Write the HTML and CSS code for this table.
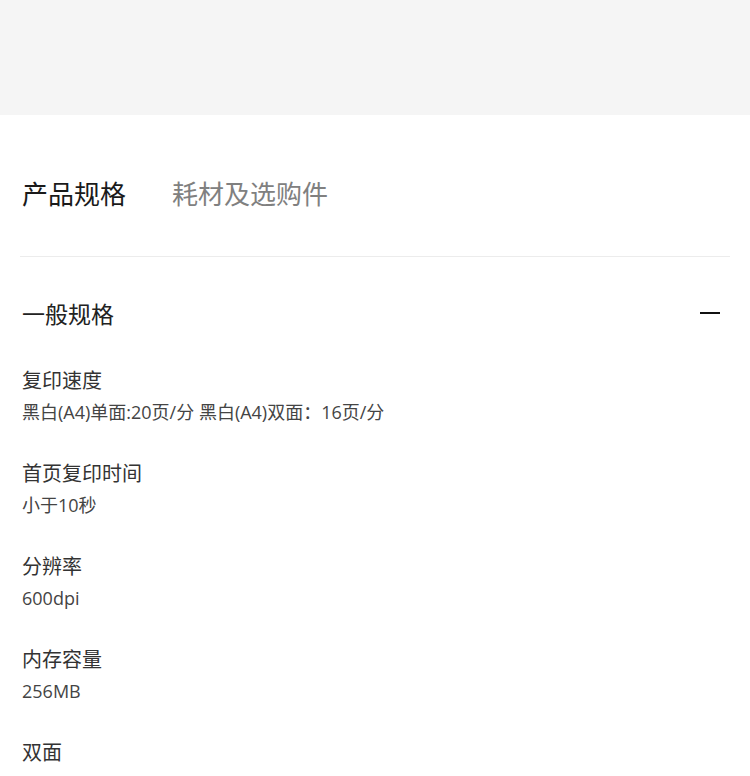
FILE: index.html
```html
<!DOCTYPE html>
<html lang="zh-CN">
<head>
    <meta charset="UTF-8">
    <meta name="viewport" content="width=device-width, initial-scale=1.0">
    <title>产品规格</title>
    <link rel="stylesheet" href="styles.css">
</head>
<body>
    <div class="banner"></div>

    <div class="container">
        <div class="tabs">
            <span class="tab active">产品规格</span>
            <span class="tab">耗材及选购件</span>
        </div>

        <div class="section-header">
            <h2>一般规格</h2>
            <span class="toggle"></span>
        </div>

        <div class="spec-list">
            <div class="spec-item">
                <div class="spec-name">复印速度</div>
                <div class="spec-value">黑白(A4)单面:20页/分 黑白(A4)双面：16页/分</div>
            </div>
            <div class="spec-item">
                <div class="spec-name">首页复印时间</div>
                <div class="spec-value">小于10秒</div>
            </div>
            <div class="spec-item">
                <div class="spec-name">分辨率</div>
                <div class="spec-value">600dpi</div>
            </div>
            <div class="spec-item">
                <div class="spec-name">内存容量</div>
                <div class="spec-value">256MB</div>
            </div>
            <div class="spec-item">
                <div class="spec-name">双面</div>
            </div>
        </div>
    </div>
</body>
</html>
```

FILE: styles.css
```css
body, html {
    margin: 0;
    padding: 0;
    background: #ffffff;
    font-family: "Noto Sans CJK SC", "Noto Sans", sans-serif;
    color: #333333;
}

.banner {
    height: 115px;
    background: #f5f5f5;
}

.container {
    padding: 0 20px;
}

.tabs {
    display: flex;
    gap: 46px;
    padding: 62px 2px 47px;
    border-bottom: 1px solid #ececec;
}

.tab {
    font-size: 26px;
    line-height: 32px;
    color: #808080;
}

.tab.active {
    color: #1a1a1a;
}

.section-header {
    display: flex;
    justify-content: space-between;
    align-items: center;
    padding: 40px 10px 0 2px;
}

.section-header h2 {
    margin: 0;
    font-size: 23px;
    font-weight: normal;
    line-height: 32px;
    color: #222222;
}

.toggle {
    width: 20px;
    height: 2px;
    background: #111111;
}

.spec-list {
    padding: 37px 2px 0;
}

.spec-item {
    padding-bottom: 34px;
}

.spec-name {
    font-size: 20px;
    line-height: 28px;
    color: #333333;
}

.spec-value {
    margin-top: 5px;
    font-family: "Open Sans", "Noto Sans CJK SC", sans-serif;
    font-size: 18px;
    line-height: 26px;
    color: #444444;
}
```
